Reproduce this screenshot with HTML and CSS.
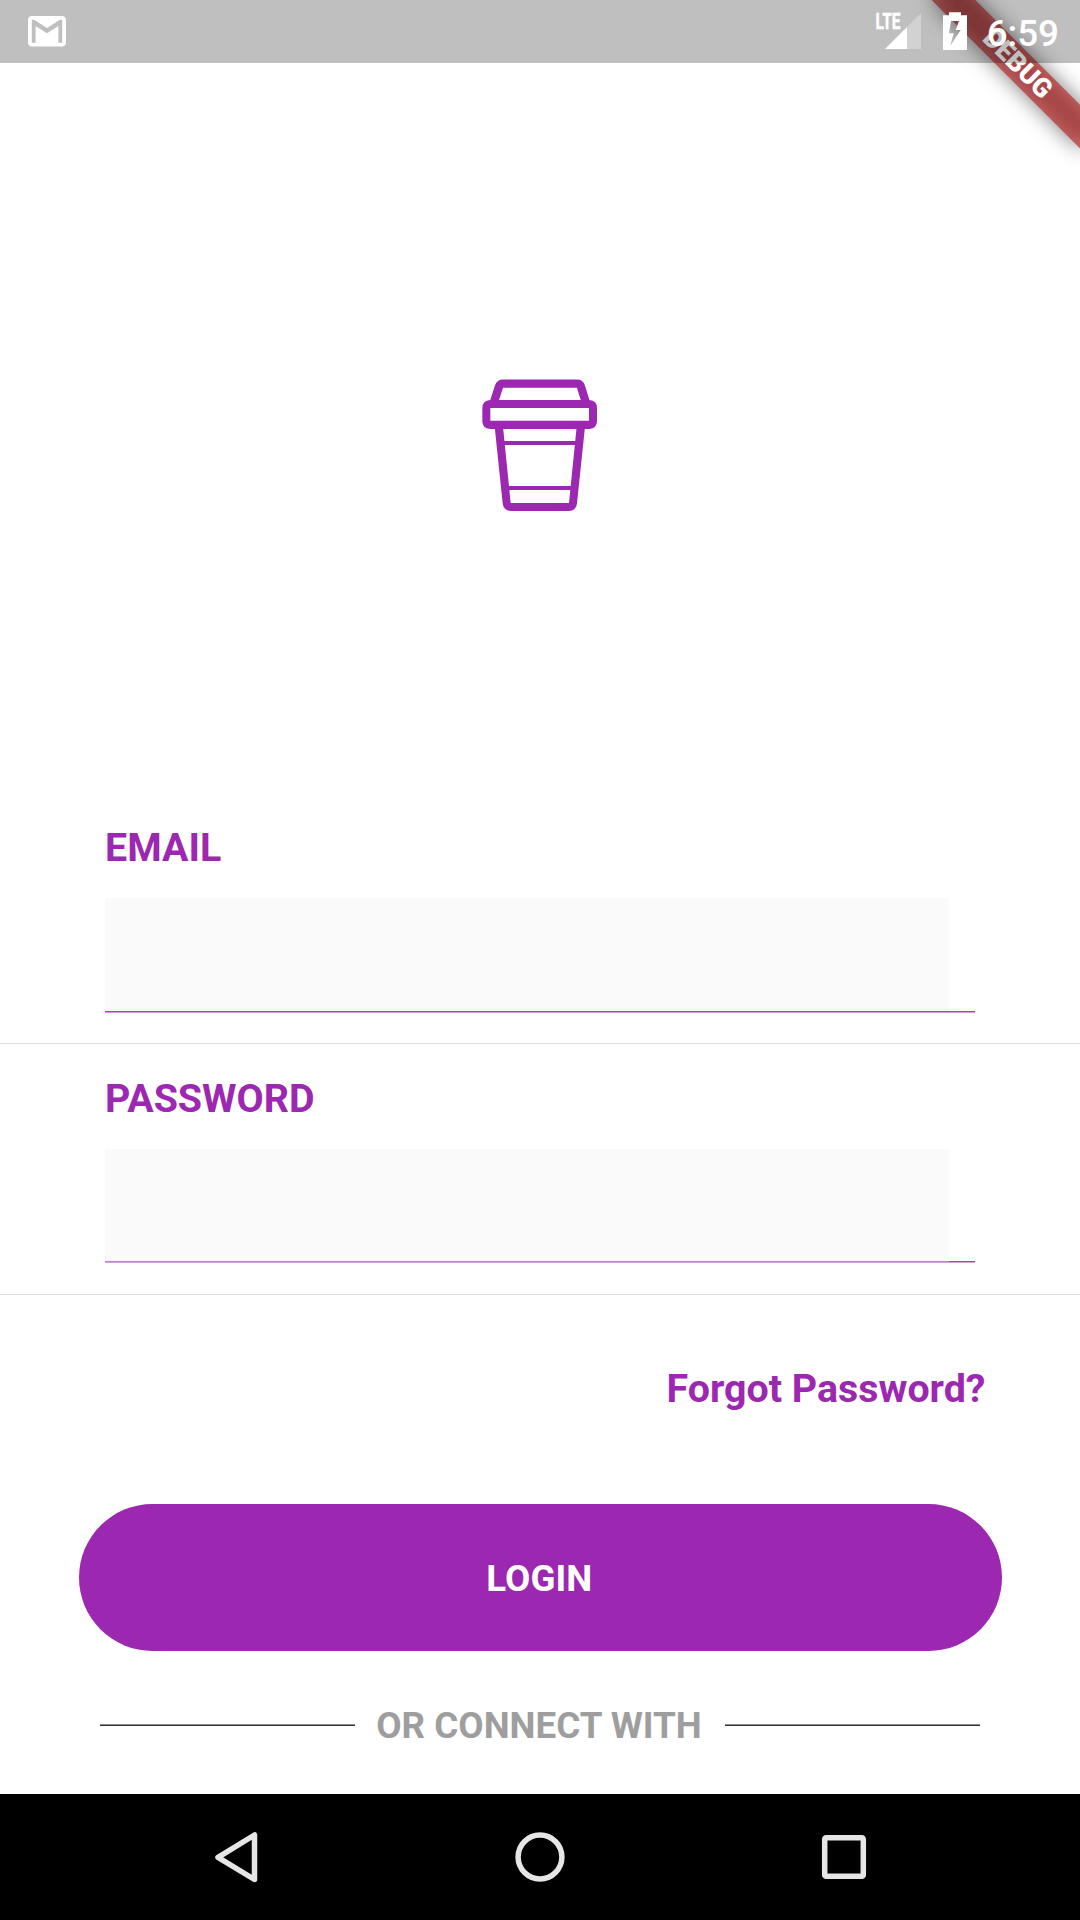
FILE: index.html
```html
<!DOCTYPE html>
<html lang="en">
<head>
<meta charset="utf-8">
<title>Login</title>
<link rel="stylesheet" href="styles.css">
</head>
<body>
<div class="screen">
  <div class="debug-banner">
    <div class="debug-shadow"></div>
    <div class="debug-ribbon">DEBUG</div>
  </div>

  <header class="status-bar">
    <svg class="status-mail" viewBox="2 4 20 16" preserveAspectRatio="none"><path fill="#fff" d="M20 4H4c-1.1 0-2 .9-2 2v12c0 1.1.9 2 2 2h16c1.1 0 2-.9 2-2V6c0-1.1-.9-2-2-2zm0 14h-2V9.25L12 13 6 9.25V18H4V6h1.2l6.8 4.25L18.8 6H20v12z"/></svg>
    <svg class="status-signal" width="46" height="63" viewBox="875 0 46 63">
      <text class="lte" x="875.6" y="29" textLength="25" lengthAdjust="spacingAndGlyphs">LTE</text>
      <path fill="#fff" fill-opacity=".3" d="M907 27L921 13V49H907Z"/>
      <path fill="#fff" d="M885 49L907 27V49Z"/>
    </svg>
    <svg class="status-battery" width="24" height="63" viewBox="943 0 24 63">
      <path fill="#fff" fill-rule="evenodd" d="M949 12.3h12v3h6V50h-24V15.300h6ZM951 21L949 33.300H953.700L950.300 45.700L960.700 30H955.700L959 21Z"/>
    </svg>
    <span class="clock">6:59</span>
  </header>

  <main class="login">
    <div class="logo">
      <svg width="160" height="170" viewBox="0 0 480 510" fill="#9c27b0">
        <path fill="none" stroke="#9c27b0" stroke-width="25" d="M102 126L117 80Q120 71 129 71H351Q360 71 363 80L377 126"/>
        <path fill-rule="evenodd" d="M90 120H388Q411 122 411 144V183Q411 205 388 207H90Q67 205 67 183V144Q67 122 90 120ZM91 144V182H387V144Z"/>
        <path d="M104 200L128 430Q131 453 153 453H326Q348 453 351 430L375 200H350L327 429H152L129 200Z"/>
        <path d="M130 243H350V255H130ZM145 378H335V390H145Z"/>
      </svg>
    </div>

    <section class="field">
      <label class="label" for="email">EMAIL</label>
      <div class="underline"><input class="input" id="email" type="email"></div>
    </section>
    <section class="field field-password">
      <label class="label" for="password">PASSWORD</label>
      <div class="underline"><input class="input" id="password" type="password"></div>
    </section>

    <a class="forgot">Forgot Password?</a>
    <button class="login-button" type="button">LOGIN</button>
    <div class="connect">
      <span class="rule"></span>
      <span class="connect-text">OR CONNECT WITH</span>
      <span class="rule"></span>
    </div>
  </main>

  <nav class="nav-bar">
    <svg width="56" height="56" viewBox="0 0 56 56"><path d="M46.500 6V50.500L10 28.300Z"/></svg>
    <svg width="56" height="56" viewBox="0 0 56 56"><circle cx="28" cy="28" r="21.900"/></svg>
    <svg width="56" height="56" viewBox="0 0 56 56"><rect x="8.700" y="8.700" width="38.600" height="38.600" rx="1.500"/></svg>
  </nav>
</div>
</body>
</html>
```
FILE: styles.css
```css
* {
  box-sizing: border-box;
}

body {
  margin: 0;
  background: #fff;
  font-family: Roboto, sans-serif;
}

.screen {
  position: relative;
  display: flex;
  flex-direction: column;
  width: 1080px;
  height: 1920px;
  overflow: hidden;
}

/* Corner ribbon, drawn around the top right corner and turned by 45 degrees */
.debug-banner {
  position: absolute;
  top: 0;
  right: 0;
  width: 0;
  height: 0;
  transform: rotate(45deg);
  transform-origin: 0 0;
}

.debug-shadow,
.debug-ribbon {
  position: absolute;
  top: 73.5px;
  left: -105px;
  width: 210px;
  height: 31.5px;
}

.debug-shadow {
  background: rgba(0, 0, 0, 0.5);
  filter: blur(10.4px);
}

.debug-ribbon {
  padding-left: 2px;
  background: rgba(183, 28, 28, 0.627);
  color: #fff;
  font-size: 26.775px;
  font-weight: 900;
  line-height: 31.5px;
  text-align: center;
}

.status-bar {
  position: relative;
  z-index: 1;
  flex: none;
  display: flex;
  height: 63px;
  padding: 0 21px 0 28.400px;
  background: rgba(0, 0, 0, 0.25);
}

.status-mail {
  width: 38px;
  height: 30.6px;
  margin-top: 16px;
}

.status-signal {
  margin-left: auto;
}

.lte {
  fill: #fff;
  stroke: #fff;
  stroke-width: 0.4;
  font-size: 21.5px;
  font-weight: 700;
}

.status-battery {
  margin-left: 22px;
}

.clock {
  margin-left: 19.500px;
  color: #fff;
  font-size: 36.75px;
  font-weight: 500;
  line-height: 67px;
}

.login {
  flex: 1;
  display: flex;
  flex-direction: column;
}

.logo {
  display: flex;
  justify-content: center;
  height: 762px;
  padding-top: 297px;
}

.field {
  flex: none;
  height: 219px;
  padding-left: 105px;
  border-bottom: 1px solid #e0e0e0;
}

.field-password {
  height: 251px;
  padding-top: 32px;
}

.label {
  display: block;
  color: #9c27b0;
  font-size: 39.375px;
  font-weight: 700;
  line-height: 46px;
}

.underline {
  width: 870px;
  height: 115px;
  margin-top: 27px;
  border-bottom: 1px solid #d79fe0;
  box-shadow: inset 0 -1px #a83fba;
}

.field-password .underline {
  height: 114px;
}

.input {
  display: block;
  width: 844px;
  height: 113px;
  padding: 0 20px;
  border: 0;
  outline: 0;
  background: #fafafa;
  font: 39.375px Roboto, sans-serif;
}

/* The password fill ends partway over its underline */
.field-password .input {
  background: linear-gradient(#fafafa 112px, rgba(250, 250, 250, 0.35) 112px);
}

.forgot {
  align-self: flex-end;
  margin: 71px 94.600px 0 0;
  color: #9c27b0;
  font-size: 39.375px;
  font-weight: 700;
  line-height: 46px;
}

.login-button {
  flex: none;
  width: 923px;
  height: 147px;
  margin: 92px auto 0;
  padding: 2px 1.500px 0 0;
  border: 0;
  border-radius: 78.75px;
  background: #9c27b0;
  color: #fff;
  font: 700 36.75px Roboto, sans-serif;
}

.connect {
  display: flex;
  align-items: center;
  justify-content: space-between;
  height: 44px;
  margin: 53px 99.500px 0;
}

.rule {
  width: 255px;
  height: 2px;
  margin-bottom: 2px;
  background: linear-gradient(#8c8c8c 50%, #333 50%);
}

.connect-text {
  margin-right: 2px;
  color: #9e9e9e;
  font-size: 36.75px;
  font-weight: 700;
  line-height: 44px;
}

.nav-bar {
  flex: none;
  display: flex;
  justify-content: center;
  align-items: center;
  gap: 248px;
  height: 126px;
  background: #000;
}

.nav-bar svg {
  fill: none;
  stroke: #e6e6e6;
  stroke-width: 5.500;
  stroke-linejoin: round;
}
```
